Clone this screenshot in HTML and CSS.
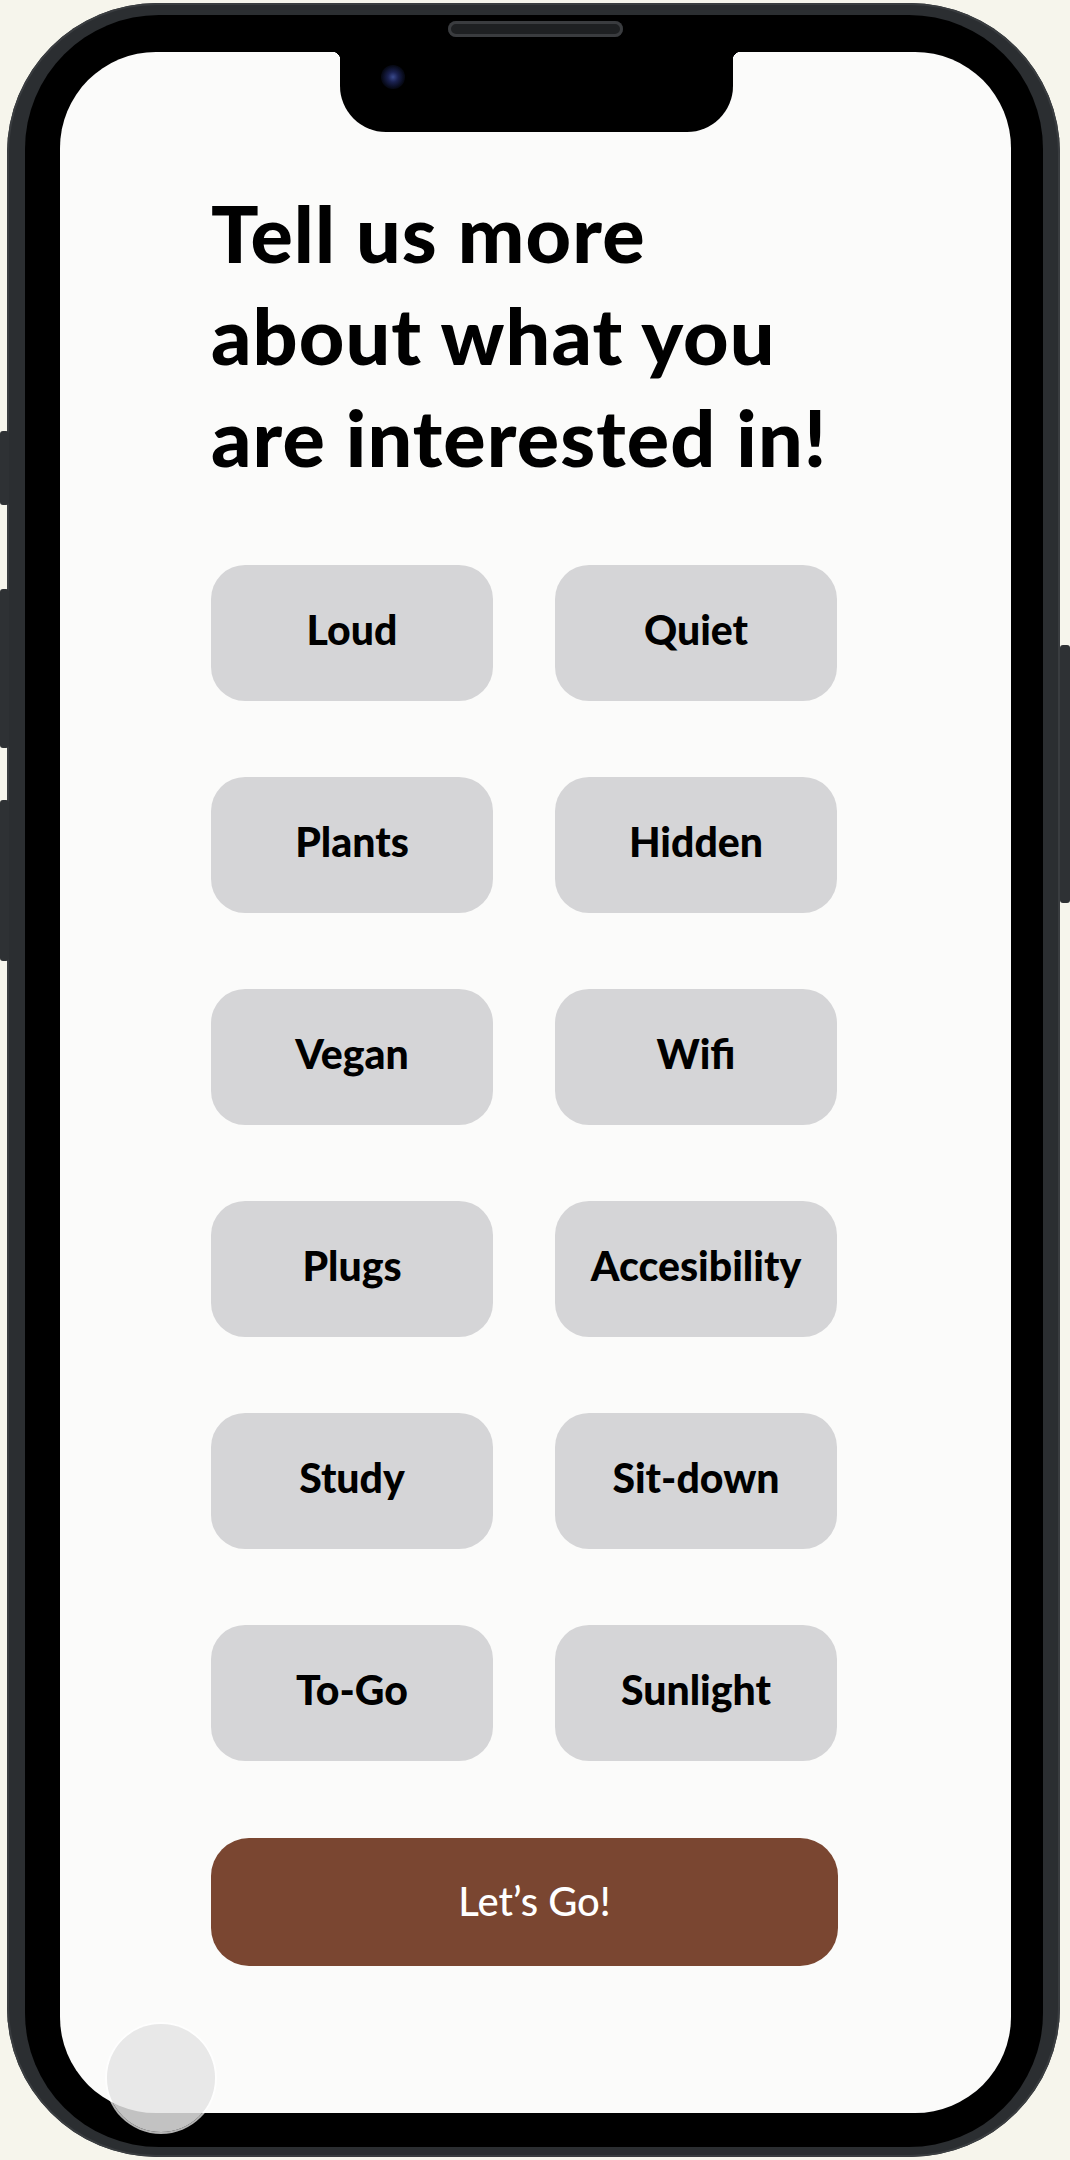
FILE: index.html
```html
<!DOCTYPE html>
<html lang="en">
<head>
<meta charset="utf-8">
<title>Interests</title>
<link rel="stylesheet" href="styles.css">
</head>
<body>
<div class="phone">
  <span class="side-btn mute"></span>
  <span class="side-btn vol-up"></span>
  <span class="side-btn vol-down"></span>
  <span class="side-btn power"></span>
  <span class="speaker"></span>
  <div class="bezel">
    <div class="screen">
      <div class="notch"><span class="camera"></span></div>
      <h1 class="title">Tell us more<br>about what you<br>are interested in!</h1>
      <div class="chips">
        <button class="chip">Loud</button>
        <button class="chip">Quiet</button>
        <button class="chip">Plants</button>
        <button class="chip">Hidden</button>
        <button class="chip">Vegan</button>
        <button class="chip">Wifi</button>
        <button class="chip">Plugs</button>
        <button class="chip">Accesibility</button>
        <button class="chip">Study</button>
        <button class="chip">Sit-down</button>
        <button class="chip">To-Go</button>
        <button class="chip">Sunlight</button>
      </div>
      <button class="go">Let’s Go!</button>
    </div>
  </div>
  <span class="touch"></span>
</div>
</body>
</html>
```

FILE: styles.css
```css
html, body {
  margin: 0;
  padding: 0;
}
body {
  background: #f6f5ec;
  width: 1070px;
  height: 2160px;
  overflow: hidden;
  font-family: Lato, "Noto Sans", sans-serif;
}
.phone {
  position: relative;
  box-sizing: border-box;
  width: 1053px;
  height: 2154px;
  margin: 3px 0 0 7px;
  padding: 12px 17px 10px 18px;
  border-radius: 150px;
  background: #2b2e31;
  box-shadow: inset 0 0 0 2px #3a3d40;
}
.bezel {
  box-sizing: border-box;
  height: 100%;
  padding: 37px 32px 34px 35px;
  border-radius: 134px;
  background: #000;
}
.screen {
  position: relative;
  box-sizing: border-box;
  height: 100%;
  border-radius: 96px;
  background: #fbfbfa;
  padding: 130px 0 0 151px;
}
.notch {
  position: absolute;
  top: 0;
  left: 280px;
  width: 393px;
  height: 80px;
  background: #000;
  border-radius: 0 0 46px 46px;
}
.notch::before,
.notch::after {
  content: "";
  position: absolute;
  top: 0;
  width: 8px;
  height: 8px;
}
.notch::before {
  left: -8px;
  background: radial-gradient(circle at 0 100%, transparent 8px, #000 8.5px);
}
.notch::after {
  right: -8px;
  background: radial-gradient(circle at 100% 100%, transparent 8px, #000 8.5px);
}
.camera {
  position: absolute;
  left: 41px;
  top: 13px;
  width: 24px;
  height: 24px;
  border-radius: 50%;
  background: radial-gradient(circle at 50% 50%, #3a4a8c 0, #1a2150 30%, #070a18 65%, #000 100%);
}
.title {
  margin: 0;
  font-size: 79px;
  line-height: 102px;
  font-weight: 900;
  color: #000;
  letter-spacing: 1.1px;
}
.chips {
  display: grid;
  grid-template-columns: 282px 282px;
  grid-auto-rows: 136px;
  column-gap: 62px;
  row-gap: 76px;
  margin-top: 77px;
}
.chip {
  border: 0;
  border-radius: 34px;
  background: #d5d5d7;
  font-family: Lato, "Noto Sans", sans-serif;
  font-weight: 900;
  font-size: 41px;
  color: #000;
  padding: 0 0 8px;
}
.go {
  display: block;
  box-sizing: border-box;
  width: 627px;
  height: 128px;
  margin-top: 77px;
  border: 0;
  border-radius: 38px;
  background: #7a4631;
  color: #fff;
  font-family: Lato, "Noto Sans", sans-serif;
  font-weight: 500;
  font-size: 40px;
  padding: 0 0 2px 20px;
}
.side-btn {
  position: absolute;
  background: #2e3134;
  border-radius: 3px;
}
.mute { left: -7px; top: 428px; width: 9px; height: 74px; }
.vol-up { left: -7px; top: 586px; width: 9px; height: 159px; }
.vol-down { left: -7px; top: 797px; width: 9px; height: 161px; }
.power { right: -10px; top: 642px; width: 10px; height: 258px; }
.speaker {
  position: absolute;
  left: 441px;
  top: 18px;
  width: 175px;
  height: 16px;
  border-radius: 8px;
  background: #1e2022;
  box-shadow: inset 0 0 0 3px #3a3c3f;
}
.touch {
  position: absolute;
  left: 100px;
  top: 2021px;
  width: 108px;
  height: 108px;
  border-radius: 50%;
  background: rgba(228, 228, 228, 0.85);
  box-shadow: 0 0 0 2px rgba(255, 255, 255, 0.7);
}
```
